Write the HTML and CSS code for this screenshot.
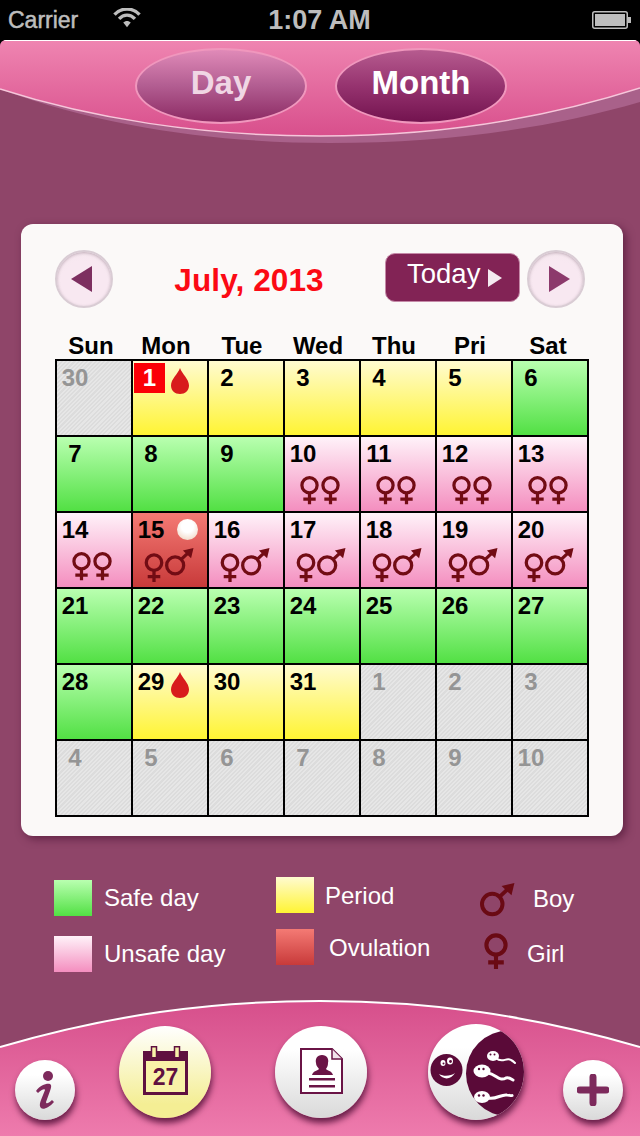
FILE: index.html
```html
<!DOCTYPE html>
<html lang="en">
<head>
<meta charset="utf-8">
<title>Calendar</title>
<link rel="stylesheet" href="styles.css">
</head>
<body>
<svg class="defs" width="0" height="0" aria-hidden="true">
  <defs>
    <symbol id="female" viewBox="0 0 20 30"><circle cx="10" cy="10" r="8" fill="none" stroke="currentColor" stroke-width="3.400"/><path d="M10 18V30M3.500 24.500H16.500" fill="none" stroke="currentColor" stroke-width="3.400"/></symbol>
    <symbol id="male" viewBox="0 0 30 29"><circle cx="10.500" cy="18" r="8.800" fill="none" stroke="currentColor" stroke-width="3.400"/><path d="M16.500 12L24 5" stroke="currentColor" stroke-width="3.400"/><path d="M18.500 2.500L29.500 0L27 10.500Z" fill="currentColor"/></symbol>
    <symbol id="drop" viewBox="0 0 18 26"><path d="M9 0C11 6 18 11 18 17.500C18 22.500 14 26 9 26C4 26 0 22.500 0 17.500C0 11 7 6 9 0Z" fill="#d81c1c"/></symbol>
    <symbol id="ff" viewBox="0 0 40 30"><use href="#female" x="0" width="19" height="30"/><use href="#female" x="21" width="19" height="30"/></symbol>
    <symbol id="fm" viewBox="0 0 50 34"><use href="#female" x="0" y="5" width="20" height="29"/><use href="#male" x="21" y="0" width="29" height="28"/></symbol>
  </defs>
</svg>

<header class="status">
  <div class="status-left">
    <span class="carrier">Carrier</span>
    <svg class="wifi" width="30" height="20" viewBox="0 0 32 24"><path d="M1 8C9-1 23-1 31 8" fill="none" stroke="#bdbdbd" stroke-width="4"/><path d="M6.500 13C12 7 20 7 25.500 13" fill="none" stroke="#bdbdbd" stroke-width="4"/><path d="M11.500 17.500C14 15 18 15 20.500 17.500L16 23Z" fill="#bdbdbd"/></svg>
  </div>
  <span class="clock">1:07 AM</span>
  <svg class="battery" width="39" height="18" viewBox="0 0 39 18"><rect x="0.750" y="0.750" width="34.500" height="16.500" rx="2" fill="none" stroke="#bdbdbd" stroke-width="1.500"/><rect x="3" y="3" width="30" height="12" fill="#bdbdbd"/><rect x="36" y="6" width="3" height="6" fill="#bdbdbd"/></svg>
</header>

<div class="app">
  <div class="top">
    <svg class="top-art" width="640" height="104" viewBox="0 0 640 104">
      <defs><linearGradient id="topg" x1="0" y1="0" x2="0" y2="1"><stop offset="0" stop-color="#ef85b1"/><stop offset="1" stop-color="#d84f8c"/></linearGradient></defs>
      <path d="M0 49C110 90 230 103 330 103C450 103 550 88 640 62V48C540 80 430 96 320 96C200 96 90 78 0 49Z" fill="#a9618a"/>
      <path d="M0 4Q0 0 4 0H636Q640 0 640 4V48C540 80 430 96 320 96C200 96 90 78 0 49Z" fill="url(#topg)"/>
      <path d="M0 49C90 78 200 96 320 96C430 96 540 80 640 48" fill="none" stroke="#f6c6da" stroke-width="1.500"/>
      <path d="M4 .5H636" stroke="#fff" stroke-width="1"/>
    </svg>
    <nav class="tabs">
      <span class="tab tab-day">Day</span>
      <span class="tab tab-month">Month</span>
    </nav>
  </div>

  <main class="card">
    <div class="cal-nav">
      <button class="round round-prev"><svg width="22" height="26" viewBox="0 0 22 26"><path d="M21 0V26L0 13Z" fill="#7d2f60"/></svg></button>
      <h1 class="title">July, 2013</h1>
      <button class="today">Today<svg width="14" height="18" viewBox="0 0 14 18"><path d="M0 0L14 9L0 18Z" fill="#f4eaf0"/></svg></button>
      <button class="round round-next"><svg width="22" height="26" viewBox="0 0 22 26"><path d="M1 0V26L22 13Z" fill="#8c3a6c"/></svg></button>
    </div>
    <div class="weekdays">
      <span class="wd-sun">Sun</span><span>Mon</span><span>Tue</span><span>Wed</span><span>Thu</span><span>Pri</span><span class="wd-sat">Sat</span>
    </div>
    <div class="grid">
      <div class="cell off"><span class="num">30</span></div>
      <div class="cell period"><span class="num num-today">1</span><svg class="drop"><use href="#drop"/></svg></div>
      <div class="cell period"><span class="num">2</span></div>
      <div class="cell period"><span class="num">3</span></div>
      <div class="cell period"><span class="num">4</span></div>
      <div class="cell period"><span class="num">5</span></div>
      <div class="cell safe"><span class="num">6</span></div>

      <div class="cell safe"><span class="num">7</span></div>
      <div class="cell safe"><span class="num">8</span></div>
      <div class="cell safe"><span class="num">9</span></div>
      <div class="cell unsafe"><span class="num">10</span><svg class="sym-ff"><use href="#ff"/></svg></div>
      <div class="cell unsafe"><span class="num">11</span><svg class="sym-ff"><use href="#ff"/></svg></div>
      <div class="cell unsafe"><span class="num">12</span><svg class="sym-ff"><use href="#ff"/></svg></div>
      <div class="cell unsafe"><span class="num">13</span><svg class="sym-ff"><use href="#ff"/></svg></div>

      <div class="cell unsafe"><span class="num">14</span><svg class="sym-ff"><use href="#ff"/></svg></div>
      <div class="cell ovulation"><span class="num">15</span><span class="pill"></span><svg class="sym-fm"><use href="#fm"/></svg></div>
      <div class="cell unsafe"><span class="num">16</span><svg class="sym-fm"><use href="#fm"/></svg></div>
      <div class="cell unsafe"><span class="num">17</span><svg class="sym-fm"><use href="#fm"/></svg></div>
      <div class="cell unsafe"><span class="num">18</span><svg class="sym-fm"><use href="#fm"/></svg></div>
      <div class="cell unsafe"><span class="num">19</span><svg class="sym-fm"><use href="#fm"/></svg></div>
      <div class="cell unsafe"><span class="num">20</span><svg class="sym-fm"><use href="#fm"/></svg></div>

      <div class="cell safe"><span class="num">21</span></div>
      <div class="cell safe"><span class="num">22</span></div>
      <div class="cell safe"><span class="num">23</span></div>
      <div class="cell safe"><span class="num">24</span></div>
      <div class="cell safe"><span class="num">25</span></div>
      <div class="cell safe"><span class="num">26</span></div>
      <div class="cell safe"><span class="num">27</span></div>

      <div class="cell safe"><span class="num">28</span></div>
      <div class="cell period"><span class="num">29</span><svg class="drop"><use href="#drop"/></svg></div>
      <div class="cell period"><span class="num">30</span></div>
      <div class="cell period"><span class="num">31</span></div>
      <div class="cell off"><span class="num">1</span></div>
      <div class="cell off"><span class="num">2</span></div>
      <div class="cell off"><span class="num">3</span></div>

      <div class="cell off"><span class="num">4</span></div>
      <div class="cell off"><span class="num">5</span></div>
      <div class="cell off"><span class="num">6</span></div>
      <div class="cell off"><span class="num">7</span></div>
      <div class="cell off"><span class="num">8</span></div>
      <div class="cell off"><span class="num">9</span></div>
      <div class="cell off"><span class="num">10</span></div>
    </div>
  </main>

  <section class="legend">
    <div class="legend-col col-a">
      <div class="legend-item"><span class="swatch safe"></span><span>Safe day</span></div>
      <div class="legend-item"><span class="swatch unsafe"></span><span>Unsafe day</span></div>
    </div>
    <div class="legend-col col-b">
      <div class="legend-item"><span class="swatch period"></span><span class="lbl-period">Period</span></div>
      <div class="legend-item"><span class="swatch ovulation"></span><span class="lbl-ovulation">Ovulation</span></div>
    </div>
    <div class="legend-col col-c">
      <div class="legend-item"><svg class="leg-male"><use href="#male"/></svg><span class="lbl-boy">Boy</span></div>
      <div class="legend-item"><svg class="leg-female"><use href="#female"/></svg><span class="lbl-girl">Girl</span></div>
    </div>
  </section>

  <footer class="bottom">
    <svg class="bottom-art" width="640" height="136" viewBox="0 0 640 136">
      <defs><linearGradient id="botg" x1="0" y1="0" x2="0" y2="1"><stop offset="0" stop-color="#d64f8b"/><stop offset="1" stop-color="#ee7bad"/></linearGradient></defs>
      <path d="M0 47C110 15 210 1 320 1C430 1 530 15 640 47V136H0Z" fill="url(#botg)"/>
      <path d="M0 47C110 15 210 1 320 1C430 1 530 15 640 47" fill="none" stroke="#fff" stroke-width="2"/>
    </svg>
    <button class="fbtn small"><svg width="20" height="38" viewBox="0 0 20 38"><circle cx="13" cy="5" r="5" fill="#7d2a5c"/><path d="M1 20C5 14 12 12 15 13C17 14 16 17 15 20L11 31C11 33 13 33 17 29L19 31C14 37 8 39 6 37C4 35 5 32 6 29L10 19C10 17 6 19 3 22Z" fill="#7d2a5c"/></svg></button>
    <button class="fbtn big cal"><svg width="45" height="49" viewBox="0 0 45 49"><path d="M0 5H45V49H0Z" fill="#5f1040"/><rect x="3" y="15" width="39" height="31" fill="#f8f2a8"/><rect x="8.500" y="0.750" width="5" height="11" fill="#f8f2a8" stroke="#5f1040" stroke-width="1.500"/><rect x="31.500" y="0.750" width="5" height="11" fill="#f8f2a8" stroke="#5f1040" stroke-width="1.500"/><text x="22.500" y="39" text-anchor="middle" class="cal-num">27</text></svg></button>
    <button class="fbtn big report"><svg width="43" height="46" viewBox="0 0 43 46"><path d="M1 1H32L42 11V45H1Z" fill="#fff" stroke="#6a1446" stroke-width="2"/><path d="M32 1V11H42" fill="#f2e4ec" stroke="#6a1446" stroke-width="1.500"/><path d="M22 7C27 7 29 11 28 15C28 18 27 19 26 21C28 23 32 23 33 27H12C13 23 17 23 19 21C18 19 16 18 16 15C15 11 17 7 22 7Z" fill="#6a1446"/><rect x="9" y="30" width="26" height="2.500" fill="#6a1446"/><rect x="9" y="37" width="26" height="2.500" fill="#6a1446"/></svg></button>
    <button class="fbtn sperm"><svg width="96" height="96" viewBox="0 0 96 96">
      <defs><clipPath id="spclip"><circle cx="48" cy="48" r="48"/></clipPath></defs>
      <g clip-path="url(#spclip)"><circle cx="81" cy="49.500" r="43" fill="#5a0a38"/></g>
      <circle cx="18.500" cy="46" r="16" fill="#5a0a38"/>
      <path d="M11 50C15 56 23 56 27 49C23 52 16 53 11 50Z" fill="#fff"/>
      <ellipse cx="15" cy="39" rx="2.500" ry="3" fill="#fff"/><ellipse cx="22" cy="37" rx="3" ry="3.500" fill="#fff"/><circle cx="15.500" cy="39.500" r="1" fill="#5a0a38"/><circle cx="22.500" cy="37.500" r="1.400" fill="#5a0a38"/>
      <g fill="none" stroke="#fff" stroke-linecap="round">
        <path d="M68 34C74 40 78 33 83 36C85 37 86 38 87 39" stroke-width="2"/>
        <path d="M60 49C68 50 71 58 78 54C81 53 83 55 85 56" stroke-width="3"/>
        <path d="M60 74C68 76 73 70 79 71C81 71 83 72 84 71.500" stroke-width="3"/>
      </g>
      <g fill="#fff"><ellipse cx="65" cy="32" rx="6" ry="5"/><ellipse cx="54" cy="47" rx="8.500" ry="6.500"/><ellipse cx="54" cy="73" rx="8" ry="6"/></g>
      <g fill="#5a0a38"><circle cx="62.500" cy="30.500" r="1"/><circle cx="66.500" cy="30.500" r="1"/><circle cx="51" cy="45" r="1.200"/><circle cx="55.500" cy="45" r="1.200"/><circle cx="51" cy="71.500" r="1.200"/><circle cx="55.500" cy="71.500" r="1.200"/></g>
    </svg></button>
    <button class="fbtn small plus"><svg width="32" height="32" viewBox="0 0 32 32"><path d="M16 3V29M3 16H29" stroke="#7d2a5c" stroke-width="7" stroke-linecap="round"/></svg></button>
  </footer>
</div>
</body>
</html>
```

FILE: styles.css
```css
* { box-sizing: border-box; }
html, body { margin: 0; padding: 0; }
body {
  width: 640px;
  height: 1136px;
  overflow: hidden;
  background: #000;
  font-family: "Liberation Sans", Arial, sans-serif;
}
button { font-family: inherit; padding: 0; border: 0; }
.defs { position: absolute; }

.status {
  height: 40px;
  display: grid;
  grid-template-columns: 1fr auto 1fr;
  align-items: center;
  padding: 0 9px 0 8px;
  color: #bdbdbd;
}
.status-left { display: flex; align-items: center; gap: 34px; }
.carrier { font-size: 23px; font-weight: 400; -webkit-text-stroke: 0.500px #bdbdbd; }
.wifi { margin-top: -4px; }
.clock { font-size: 27px; font-weight: 700; }
.battery { justify-self: end; }

.app {
  height: 1096px;
  display: flex;
  flex-direction: column;
  background: #8f4569;
  border-radius: 6px 6px 0 0;
  overflow: hidden;
}

.top { position: relative; height: 104px; flex: none; }
.top-art { position: absolute; inset: 0; }
.tabs {
  position: relative;
  display: flex;
  gap: 28px;
  padding: 8px 0 0 135px;
}
.tab {
  width: 172px;
  height: 76px;
  border-radius: 50%;
  display: flex;
  align-items: center;
  justify-content: center;
  padding-bottom: 7px;
  font-size: 33px;
  font-weight: 700;
  border: 2px solid #f097bd;
}
.tab-day { background: linear-gradient(#e08ab8, #b25d91 50%, #8c2a63); color: #f0d6e4; }
.tab-month { background: linear-gradient(#b65b8f, #96336f 50%, #73134f); color: #fff; }

.card {
  flex: none;
  width: 602px;
  height: 612px;
  margin: 80px 0 0 21px;
  padding: 26px 34px 0;
  background: #fbf9f8;
  border-radius: 12px;
  box-shadow: 3px 3px 8px rgba(60, 10, 40, 0.550);
}
.cal-nav { display: flex; align-items: center; height: 58px; padding-right: 4px; }
.round {
  width: 58px;
  height: 58px;
  flex: none;
  border-radius: 50%;
  border: 2px solid #d9ccd4;
  background: radial-gradient(circle at 50% 60%, #f8e8f1 55%, #f3e6ec 100%);
  box-shadow: inset 0 1px 3px rgba(90, 60, 80, 0.350);
  display: flex;
  align-items: center;
  justify-content: center;
}
.round svg { margin-top: -1px; }
.round-prev { padding-right: 4px; }
.round-next { padding-left: 6px; }
.title {
  flex: 1;
  margin: 0;
  padding-top: 2px;
  text-align: center;
  color: #fb0a14;
  font-size: 31.500px;
  font-weight: 700;
  letter-spacing: 0.100px;
}
.today {
  width: 135px;
  height: 49px;
  margin: -3px 7px 0 0;
  border-radius: 10px;
  background: #822355;
  border: 1px solid #c58aa8;
  color: #fff;
  font-size: 27.500px;
  display: flex;
  align-items: center;
  gap: 8px;
  padding: 0 0 7px 21px;
}
.today svg { margin-top: 8px; flex: none; }

.weekdays {
  display: grid;
  grid-template-columns: repeat(7, 76px);
  margin-top: 24px;
  height: 27px;
  font-size: 24px;
  font-weight: 700;
  line-height: 27px;
  text-align: center;
  color: #000;
}
.weekdays span { margin-left: -5px; margin-right: 1px; white-space: nowrap; }
.weekdays .wd-sun { margin-left: -3px; }
.weekdays .wd-sat { margin-left: -1px; }

.grid {
  display: grid;
  grid-template-columns: repeat(7, 76px);
  grid-auto-rows: 76px;
  width: 534px;
  border-right: 2px solid #000;
  border-bottom: 2px solid #000;
}
.cell {
  position: relative;
  display: flex;
  flex-direction: column;
  border-left: 2px solid #000;
  border-top: 2px solid #000;
}
.num {
  width: 36px;
  height: 34px;
  line-height: 34px;
  text-align: center;
  font-size: 24px;
  font-weight: 700;
  color: #000;
}
.num-today {
  position: absolute;
  left: 1px;
  top: 2px;
  width: 31px;
  height: 30px;
  line-height: 30px;
  background: #fb0006;
  color: #fff;
}
.safe { background: linear-gradient(#b9ffb0, #52e044); }
.period { background: linear-gradient(#fffbd0, #fff433); }
.unsafe { background: linear-gradient(#fff2f9, #f48ebf); }
.ovulation { background: linear-gradient(#f47a74, #c83a3a); }
.off {
  background: repeating-linear-gradient(135deg, #dcdcdc 0, #dcdcdc 1.500px, #e6e6e6 1.500px, #e6e6e6 3px);
}
.off .num { color: #959595; }
.drop { position: absolute; left: 38px; top: 7px; width: 18px; height: 26px; }
.pill {
  position: absolute;
  left: 44px;
  top: 6px;
  width: 21px;
  height: 21px;
  border-radius: 50%;
  background: radial-gradient(circle at 50% 35%, #fff 35%, #f1d8c6 85%, #e3b9a3);
}
.sym-ff, .sym-fm { color: #720c14; align-self: center; margin-top: auto; }
.sym-ff { width: 40px; height: 30px; margin-bottom: 6px; margin-right: 4px; }
.sym-fm { width: 50px; height: 34px; margin-bottom: 5px; margin-right: 2px; }

.legend {
  position: relative;
  flex: none;
  display: flex;
  margin-top: 41px;
  color: #fff;
  font-size: 24px;
}
.legend-col { display: flex; flex-direction: column; }
.legend-item { display: flex; align-items: center; height: 36px; }
.col-a { width: 276px; padding: 3px 0 0 54px; gap: 20px; }
.col-a .legend-item { gap: 12px; }
.col-b { width: 204px; gap: 16px; }
.lbl-period { margin: 2px 0 0 11px; }
.lbl-ovulation { margin: 2px 0 0 15px; }
.col-c { padding-top: 5px; gap: 15px; }
.swatch { width: 38px; height: 36px; flex: none; }
.leg-male { width: 35px; height: 34px; color: #6a0a14; }
.leg-female { width: 24px; height: 38px; margin-left: 4px; color: #6a0a14; }
.lbl-boy { margin: -3px 0 0 18px; }
.lbl-girl { margin: 5px 0 0 19px; }

.bottom {
  position: relative;
  margin-top: auto;
  height: 136px;
  flex: none;
  display: flex;
  align-items: flex-end;
  padding: 0 0 16px 15px;
}
.bottom-art { position: absolute; inset: 0; }
.fbtn {
  position: relative;
  flex: none;
  border-radius: 50%;
  display: flex;
  align-items: center;
  justify-content: center;
  background: linear-gradient(#fff 25%, #d9d9d9);
  box-shadow: 1px 5px 6px rgba(60, 0, 40, 0.750);
}
.small { width: 60px; height: 60px; }
.big { width: 92px; height: 92px; margin-bottom: 2px; }
.cal { margin-left: 44px; padding-bottom: 4px; background: linear-gradient(#fff, #f4ee94 85%); }
.cal-num { font-family: "Liberation Sans", Arial, sans-serif; font-size: 23px; font-weight: 700; fill: #5f1040; }
.report { margin-left: 64px; padding-bottom: 2px; }
.sperm { width: 96px; height: 96px; margin-left: 61px; }
.plus { margin-left: 39px; }
```
